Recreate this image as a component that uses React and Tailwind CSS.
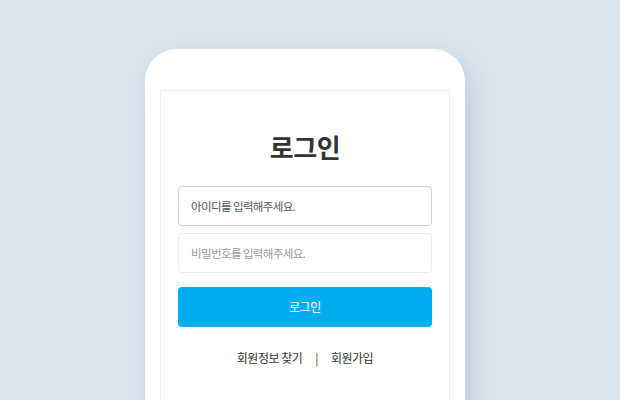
import React from 'react';

const App = () => {
    return (
        <div
            className="w-[620px] h-[400px] overflow-hidden bg-[#dce6f0] flex pl-[145px] pt-[49px]"
            style={{ fontFamily: '"Noto Sans CJK KR", "Noto Sans", sans-serif' }}
        >
            <div className="w-[320px] h-[420px] bg-white rounded-t-[32px] px-[15px] pt-[41px] shadow-[6px_10px_28px_rgba(140,165,195,0.45)]">
                <div className="h-[400px] border border-[#ececec] px-[17px] pt-[39px]">
                    <h1 className="text-center text-[26px] leading-[34px] font-bold tracking-[-0.5px] text-[#333] mb-[22px]">
                        로그인
                    </h1>

                    <div className="flex flex-col">
                        <input
                            type="text"
                            defaultValue="아이디를 입력해주세요."
                            className="h-[40px] w-full border border-[#cfcfcf] rounded-[4px] px-[12px] text-[11.5px] tracking-[-0.6px] text-[#555] outline-none"
                        />
                        <input
                            type="password"
                            placeholder="비밀번호를 입력해주세요."
                            className="h-[40px] w-full mt-[7px] border border-[#ebebeb] rounded-[4px] px-[12px] text-[11.5px] tracking-[-0.6px] text-[#555] placeholder:text-[#999] outline-none"
                        />
                        <button
                            type="button"
                            className="h-[40px] w-full mt-[14px] bg-[#00aeef] rounded-[4px] text-white text-[12px] tracking-[-0.3px]"
                        >
                            로그인
                        </button>
                    </div>

                    <div className="mt-[21px] flex justify-center items-center text-[12px] leading-[20px] tracking-[-0.5px] text-[#333]">
                        <span>회원정보 찾기</span>
                        <span className="mx-[13px] text-[#444]">|</span>
                        <span>회원가입</span>
                    </div>
                </div>
            </div>
        </div>
    );
};

export default App;
